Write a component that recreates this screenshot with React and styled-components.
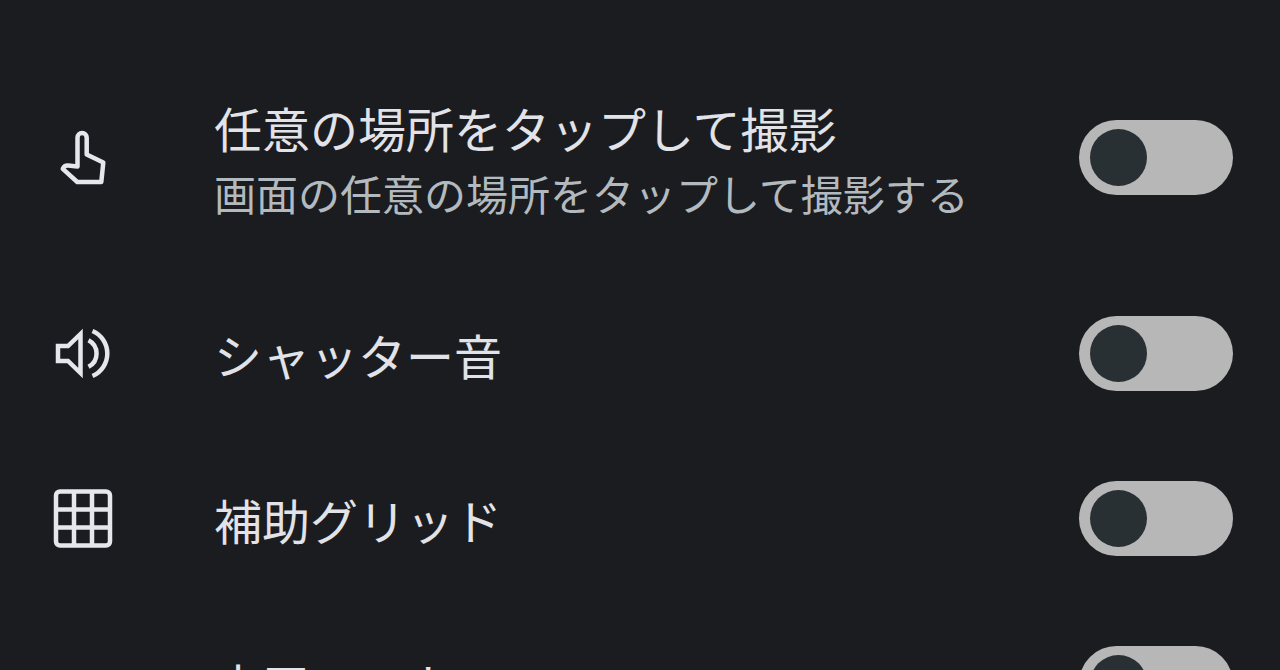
import React from "react";
import styled, { createGlobalStyle } from "styled-components";

const GlobalStyle = createGlobalStyle`
  * { box-sizing: border-box; }
  body {
    margin: 0;
    background: #1b1c20;
    color: #e2e3e8;
    font-family: "Noto Sans CJK JP", "Noto Sans", sans-serif;
  }
`;

const Screen = styled.main`
  height: 100vh;
  overflow: hidden;
  padding-top: 44px;
`;

const SettingList = styled.ul`
  list-style: none;
  margin: 0;
  padding: 0;
`;

const Row = styled.li`
  display: flex;
  align-items: center;
  min-height: ${(p) => (p.$tall ? 227 : 165)}px;
  padding: 0 47px 0 53px;
`;

const IconSlot = styled.span`
  flex: none;
  width: 161px;
  height: 60px;

  svg {
    display: block;
    width: 60px;
    height: 60px;
    fill: none;
    stroke: #e6e7ec;
  }
`;

const Texts = styled.div`
  flex: 1;
  min-width: 0;
  display: grid;
  gap: 2px;
  padding-top: ${(p) => (p.$tall ? 4 : 0)}px;
`;

const Title = styled.label`
  display: block;
  font-size: 48px;
  line-height: 64px;
  white-space: nowrap;
`;

const Description = styled.p`
  margin: 0;
  font-size: 42px;
  line-height: 64px;
  color: #b3babf;
  white-space: nowrap;
`;

const Switch = styled.input`
  appearance: none;
  flex: none;
  display: flex;
  align-items: center;
  width: 154px;
  height: 75px;
  margin: 0;
  padding: 0 11px;
  border-radius: 38px;
  background: #b7b7b8;
  cursor: pointer;

  &::before {
    content: "";
    width: 57px;
    height: 57px;
    border-radius: 50%;
    background: #293033;
  }

  &:checked {
    justify-content: flex-end;
  }
`;

const TapIcon = () => (
  <svg viewBox="0 0 60 60" aria-hidden="true" strokeWidth="4.5" strokeLinejoin="round">
    <path d="M24.500 38.500V9.500a4.600 4.600 0 0 1 9.200 0V26.500L50.300 34.500L48.300 54H24.300L9.800 40.800Q11.500 37.300 15 37.600L24.500 38.500Z" />
  </svg>
);

const SoundIcon = () => (
  <svg viewBox="0 0 60 60" aria-hidden="true" strokeWidth="4.500">
    <path d="M5 22H15L27.500 10V49L15 37H5Z" />
    <path d="M35.500 16.200A15 15 0 0 1 35.500 42.800" />
    <path d="M39.500 7A24.500 24.500 0 0 1 39.500 52" />
  </svg>
);

const GridIcon = () => (
  <svg viewBox="0 0 60 60" aria-hidden="true" strokeWidth="4.500">
    <rect x="3" y="2.500" width="54" height="54" rx="4" />
    <path d="M21 2.500V56.500M39 2.500V56.500M3 20.500H57M3 38.500H57" />
  </svg>
);

const settings = [
  {
    id: "tap",
    title: "任意の場所をタップして撮影",
    description: "画面の任意の場所をタップして撮影する",
    Icon: TapIcon,
  },
  { id: "sound", title: "シャッター音", Icon: SoundIcon },
  { id: "grid", title: "補助グリッド", Icon: GridIcon },
  { id: "level", title: "水平マーカー" },
];

export default function App() {
  return (
    <>
      <GlobalStyle />
      <Screen lang="ja">
        <SettingList>
          {settings.map(({ id, title, description, Icon }) => (
            <Row key={id} $tall={Boolean(description)}>
              <IconSlot>{Icon && <Icon />}</IconSlot>
              <Texts $tall={Boolean(description)}>
                <Title htmlFor={id}>{title}</Title>
                {description && <Description>{description}</Description>}
              </Texts>
              <Switch id={id} type="checkbox" role="switch" />
            </Row>
          ))}
        </SettingList>
      </Screen>
    </>
  );
}
